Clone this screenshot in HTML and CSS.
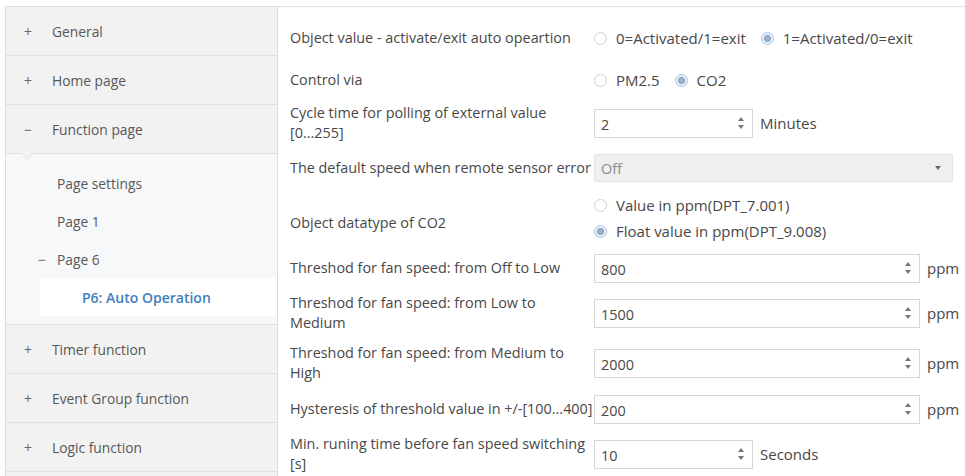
FILE: index.html
```html
<!DOCTYPE html>
<html lang="en">
<head>
  <meta charset="UTF-8" />
  <title>P6: Auto Operation</title>
  <link rel="stylesheet" href="styles.css">
</head>
<body>

<div class="app">
  <nav class="sidebar">
    <div class="nav-item"><span class="sign">+</span>General</div>
    <div class="nav-item"><span class="sign">+</span>Home page</div>
    <div class="nav-item open"><span class="sign">&minus;</span>Function page</div>
    <div class="sub">
      <div class="sub-item">Page settings</div>
      <div class="sub-item">Page 1</div>
      <div class="sub-item"><span class="sign">&minus;</span>Page 6</div>
      <div class="sub-item active">P6: Auto Operation</div>
    </div>
    <div class="nav-item"><span class="sign">+</span>Timer function</div>
    <div class="nav-item"><span class="sign">+</span>Event Group function</div>
    <div class="nav-item"><span class="sign">+</span>Logic function</div>
  </nav>

  <main class="params">
    <div class="row h42">
      <div class="label">Object value - activate/exit auto opeartion</div>
      <div class="control">
        <span class="radio"></span><span class="opt">0=Activated/1=exit</span>
        <span class="radio on"></span><span class="opt">1=Activated/0=exit</span>
      </div>
    </div>

    <div class="row h42">
      <div class="label">Control via</div>
      <div class="control">
        <span class="radio"></span><span class="opt">PM2.5</span>
        <span class="radio on"></span><span class="opt">CO2</span>
      </div>
    </div>

    <div class="row h44">
      <div class="label">Cycle time for polling of external value [0...255]</div>
      <div class="control">
        <div class="spin short"><span class="val">2</span><span class="arrows"><i class="up"></i><i class="down"></i></span></div>
        <span class="unit">Minutes</span>
      </div>
    </div>

    <div class="row h46">
      <div class="label">The default speed when remote sensor error</div>
      <div class="control">
        <div class="select"><span class="val">Off</span><i class="caret"></i></div>
      </div>
    </div>

    <div class="row h54">
      <div class="label low">Object datatype of CO2</div>
      <div class="control stack">
        <div class="line"><span class="radio"></span><span class="opt">Value in ppm(DPT_7.001)</span></div>
        <div class="line"><span class="radio on"></span><span class="opt">Float value in ppm(DPT_9.008)</span></div>
      </div>
    </div>

    <div class="row h46">
      <div class="label">Threshod for fan speed: from Off to Low</div>
      <div class="control">
        <div class="spin long"><span class="val">800</span><span class="arrows"><i class="up"></i><i class="down"></i></span></div>
        <span class="unit">ppm</span>
      </div>
    </div>

    <div class="row h44">
      <div class="label">Threshod for fan speed: from Low to Medium</div>
      <div class="control">
        <div class="spin long"><span class="val">1500</span><span class="arrows"><i class="up"></i><i class="down"></i></span></div>
        <span class="unit">ppm</span>
      </div>
    </div>

    <div class="row h56">
      <div class="label">Threshod for fan speed: from Medium to High</div>
      <div class="control">
        <div class="spin long"><span class="val">2000</span><span class="arrows"><i class="up"></i><i class="down"></i></span></div>
        <span class="unit">ppm</span>
      </div>
    </div>

    <div class="row h36">
      <div class="label">Hysteresis of threshold value in +/-[100...400]</div>
      <div class="control">
        <div class="spin long"><span class="val">200</span><span class="arrows"><i class="up"></i><i class="down"></i></span></div>
        <span class="unit">ppm</span>
      </div>
    </div>

    <div class="row h54">
      <div class="label">Min. runing time before fan speed switching [s]</div>
      <div class="control">
        <div class="spin short"><span class="val">10</span><span class="arrows"><i class="up"></i><i class="down"></i></span></div>
        <span class="unit">Seconds</span>
      </div>
    </div>
  </main>
</div>

</body>
</html>
```

FILE: styles.css
```css
body {
  margin: 0;
  background: #fff;
  font-family: "Open Sans", Arial, sans-serif;
  color: #484848;
}
.app {
  display: flex;
  margin: 6px 0 0 5px;
  border-top: 1px solid #e1e1e1;
  height: 470px;
  overflow: hidden;
}

/* left tree */
.sidebar {
  width: 271px;
  flex-shrink: 0;
  background: #f2f2f2;
  border-left: 1px solid #dcdcdc;
  border-right: 1px solid #dcdcdc;
  font-size: 13.8px;
  color: #585858;
}
.nav-item {
  height: 48px;
  display: flex;
  align-items: center;
  padding-left: 18px;
  border-bottom: 1px solid #e0e0e0;
  position: relative;
}
.sign {
  width: 28px;
  display: inline-block;
  font-size: 14px;
  color: #666;
}
.nav-item.open::after {
  content: "";
  position: absolute;
  left: 15px;
  bottom: -6px;
  border-left: 6px solid transparent;
  border-right: 6px solid transparent;
  border-top: 6px solid #f2f2f2;
}
.nav-item.open::before {
  content: "";
  position: absolute;
  left: 14px;
  bottom: -7px;
  border-left: 7px solid transparent;
  border-right: 7px solid transparent;
  border-top: 7px solid #e0e0e0;
}
.sub {
  background: #f6f8fa;
  padding: 10px 0 8px;
  border-bottom: 1px solid #e0e0e0;
}
.sub-item {
  height: 38px;
  display: flex;
  align-items: center;
  padding-left: 51px;
}
.sub-item .sign {
  width: 19px;
  margin-left: -19px;
}
.sub-item.active {
  background: #fff;
  margin-left: 34px;
  padding-left: 42px;
  font-weight: 600;
  color: #3f7fbf;
  font-size: 14px;
}

/* parameter list */
.params {
  flex: 1;
  padding: 10px 0 0 12px;
  font-size: 14.4px;
}
.row {
  display: flex;
  align-items: center;
}
.h36 { height: 36px; }
.h42 { height: 42px; }
.h44 { height: 44px; }
.h46 { height: 46px; }
.h54 { height: 54px; }
.h56 { height: 56px; }
.label {
  width: 304px;
  flex-shrink: 0;
  line-height: 20px;
}
.label.low {
  padding-top: 10px;
}
.control {
  display: flex;
  align-items: center;
  font-size: 15px;
}
.control.stack {
  flex-direction: column;
  align-items: flex-start;
  gap: 6px;
}
.line {
  display: flex;
  align-items: center;
}
.radio {
  width: 13px;
  height: 13px;
  border: 1px solid #cfcfcf;
  border-radius: 50%;
  background: #fff;
  box-sizing: border-box;
  display: flex;
  align-items: center;
  justify-content: center;
}
.radio.on {
  border-color: #b3c6db;
  background: #e6eef7;
}
.radio.on::after {
  content: "";
  width: 7px;
  height: 7px;
  box-sizing: border-box;
  border-radius: 50%;
  background: #9bb3cd;
  border: 1px solid #7893b2;
}
.opt {
  margin: 0 15px 0 9px;
}
.spin, .select {
  height: 29px;
  box-sizing: border-box;
  border: 1px solid #d6d6d6;
  display: flex;
  align-items: center;
  padding: 3px 8px 0 6px;
  font-size: 14.4px;
}
.spin.short { width: 159px; }
.spin.long { width: 326px; }
.val { flex: 1; }
.arrows {
  display: flex;
  flex-direction: column;
  gap: 4px;
  margin-top: -3px;
}
.arrows i {
  width: 0;
  height: 0;
  border-left: 3px solid transparent;
  border-right: 3px solid transparent;
}
.arrows .up { border-bottom: 4px solid #777; }
.arrows .down { border-top: 4px solid #777; }
.unit {
  margin-left: 7px;
}
.select {
  width: 359px;
  height: 28px;
  background: #efefef;
  border-color: #e4e4e4;
  color: #8a8a8a;
  padding-top: 0;
}
.caret {
  width: 0;
  height: 0;
  border-left: 3.5px solid transparent;
  border-right: 3.5px solid transparent;
  border-top: 4px solid #666;
  margin-right: 3px;
}
```
